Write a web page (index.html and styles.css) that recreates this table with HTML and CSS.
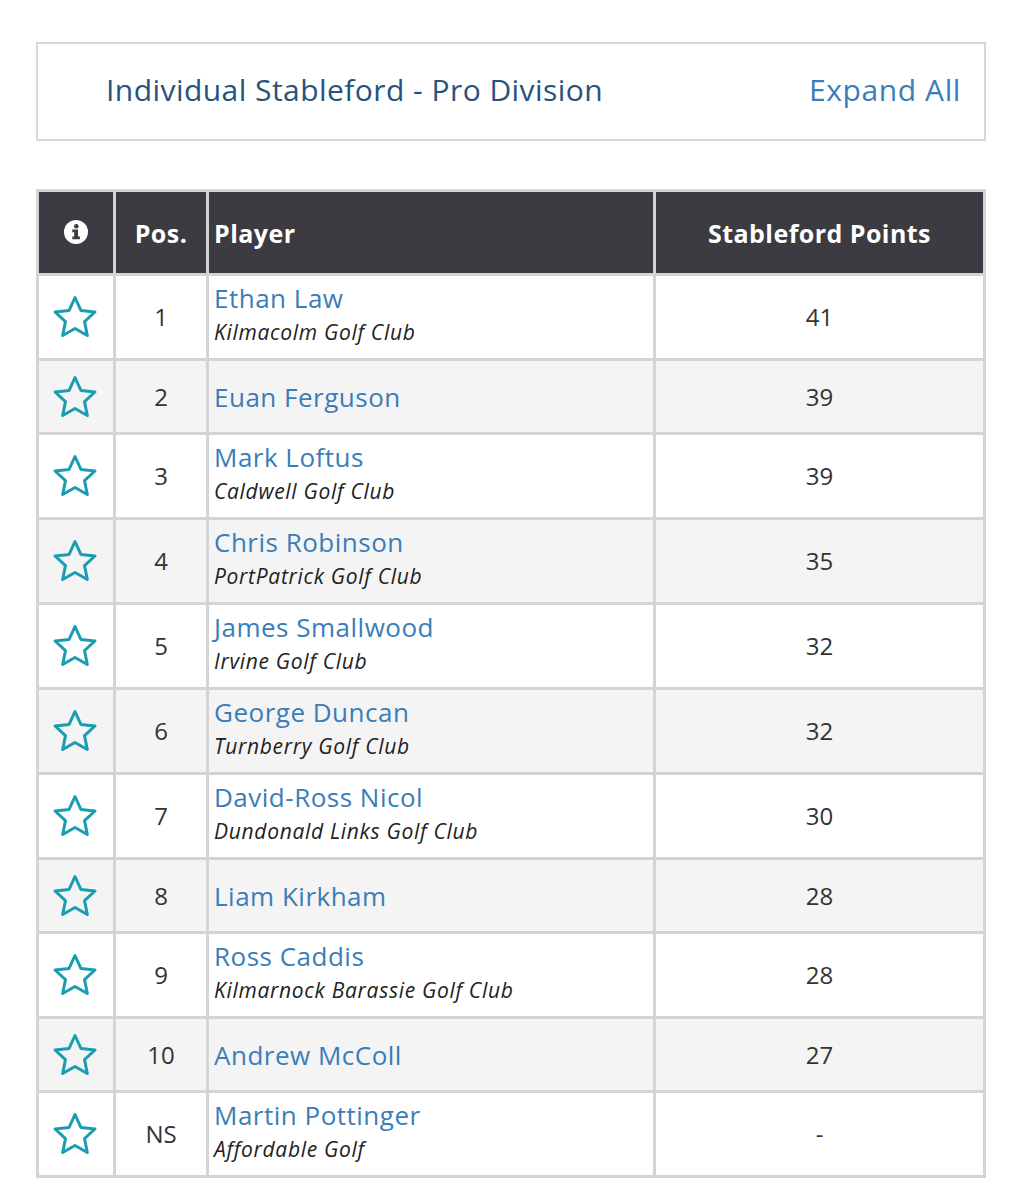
FILE: index.html
```html
<!DOCTYPE html>
<html>
<head>
<meta charset="utf-8">
<link rel="stylesheet" href="styles.css">
</head>
<body>
<div class="page">
  <div class="titlebox">
    <span class="title">Individual Stableford - Pro Division</span>
    <a class="expand">Expand All</a>
  </div>

  <table class="board">
    <colgroup>
      <col class="c-fav"><col class="c-pos"><col class="c-player"><col class="c-pts">
    </colgroup>
    <thead>
      <tr>
        <th class="fav"><svg class="info" viewBox="0 0 24 24" width="24" height="24"><circle cx="12" cy="12" r="12" fill="#fff"/><circle cx="12.3" cy="6.3" r="2.3" fill="#3c3b41"/><path d="M8.3 9.6H14V16.4H15.9V19.2H8.3V16.4H10.2V12.3H8.3Z" fill="#3c3b41"/></svg></th>
        <th class="pos">Pos.</th>
        <th class="player">Player</th>
        <th class="pts">Stableford Points</th>
      </tr>
    </thead>
    <tbody>
      <tr class="double"><td class="fav"><svg class="star" viewBox="0 0 48 48"><path d="M24 4.5L29.88 17.41L43.97 19.01L33.51 28.59L36.34 42.49L24 35.5L11.66 42.49L14.49 28.59L4.03 19.01L18.12 17.41Z"/></svg></td><td class="pos">1</td><td class="player"><a class="name">Ethan Law</a><span class="club">Kilmacolm Golf Club</span></td><td class="pts">41</td></tr>
      <tr class="single"><td class="fav"><svg class="star" viewBox="0 0 48 48"><path d="M24 4.5L29.88 17.41L43.97 19.01L33.51 28.59L36.34 42.49L24 35.5L11.66 42.49L14.49 28.59L4.03 19.01L18.12 17.41Z"/></svg></td><td class="pos">2</td><td class="player"><a class="name">Euan Ferguson</a></td><td class="pts">39</td></tr>
      <tr class="double"><td class="fav"><svg class="star" viewBox="0 0 48 48"><path d="M24 4.5L29.88 17.41L43.97 19.01L33.51 28.59L36.34 42.49L24 35.5L11.66 42.49L14.49 28.59L4.03 19.01L18.12 17.41Z"/></svg></td><td class="pos">3</td><td class="player"><a class="name">Mark Loftus</a><span class="club">Caldwell Golf Club</span></td><td class="pts">39</td></tr>
      <tr class="double"><td class="fav"><svg class="star" viewBox="0 0 48 48"><path d="M24 4.5L29.88 17.41L43.97 19.01L33.51 28.59L36.34 42.49L24 35.5L11.66 42.49L14.49 28.59L4.03 19.01L18.12 17.41Z"/></svg></td><td class="pos">4</td><td class="player"><a class="name">Chris Robinson</a><span class="club">PortPatrick Golf Club</span></td><td class="pts">35</td></tr>
      <tr class="double"><td class="fav"><svg class="star" viewBox="0 0 48 48"><path d="M24 4.5L29.88 17.41L43.97 19.01L33.51 28.59L36.34 42.49L24 35.5L11.66 42.49L14.49 28.59L4.03 19.01L18.12 17.41Z"/></svg></td><td class="pos">5</td><td class="player"><a class="name">James Smallwood</a><span class="club">Irvine Golf Club</span></td><td class="pts">32</td></tr>
      <tr class="double"><td class="fav"><svg class="star" viewBox="0 0 48 48"><path d="M24 4.5L29.88 17.41L43.97 19.01L33.51 28.59L36.34 42.49L24 35.5L11.66 42.49L14.49 28.59L4.03 19.01L18.12 17.41Z"/></svg></td><td class="pos">6</td><td class="player"><a class="name">George Duncan</a><span class="club">Turnberry Golf Club</span></td><td class="pts">32</td></tr>
      <tr class="double"><td class="fav"><svg class="star" viewBox="0 0 48 48"><path d="M24 4.5L29.88 17.41L43.97 19.01L33.51 28.59L36.34 42.49L24 35.5L11.66 42.49L14.49 28.59L4.03 19.01L18.12 17.41Z"/></svg></td><td class="pos">7</td><td class="player"><a class="name">David-Ross Nicol</a><span class="club">Dundonald Links Golf Club</span></td><td class="pts">30</td></tr>
      <tr class="single"><td class="fav"><svg class="star" viewBox="0 0 48 48"><path d="M24 4.5L29.88 17.41L43.97 19.01L33.51 28.59L36.34 42.49L24 35.5L11.66 42.49L14.49 28.59L4.03 19.01L18.12 17.41Z"/></svg></td><td class="pos">8</td><td class="player"><a class="name">Liam Kirkham</a></td><td class="pts">28</td></tr>
      <tr class="double"><td class="fav"><svg class="star" viewBox="0 0 48 48"><path d="M24 4.5L29.88 17.41L43.97 19.01L33.51 28.59L36.34 42.49L24 35.5L11.66 42.49L14.49 28.59L4.03 19.01L18.12 17.41Z"/></svg></td><td class="pos">9</td><td class="player"><a class="name">Ross Caddis</a><span class="club">Kilmarnock Barassie Golf Club</span></td><td class="pts">28</td></tr>
      <tr class="single"><td class="fav"><svg class="star" viewBox="0 0 48 48"><path d="M24 4.5L29.88 17.41L43.97 19.01L33.51 28.59L36.34 42.49L24 35.5L11.66 42.49L14.49 28.59L4.03 19.01L18.12 17.41Z"/></svg></td><td class="pos">10</td><td class="player"><a class="name">Andrew McColl</a></td><td class="pts">27</td></tr>
      <tr class="double"><td class="fav"><svg class="star" viewBox="0 0 48 48"><path d="M24 4.5L29.88 17.41L43.97 19.01L33.51 28.59L36.34 42.49L24 35.5L11.66 42.49L14.49 28.59L4.03 19.01L18.12 17.41Z"/></svg></td><td class="pos">NS</td><td class="player"><a class="name">Martin Pottinger</a><span class="club">Affordable Golf</span></td><td class="pts">-</td></tr>
    </tbody>
  </table>
</div>
</body>
</html>
```

FILE: styles.css
```css
html, body {
  margin: 0;
  padding: 0;
  background: #fff;
}
body {
  font-family: "Open Sans", "Lato", sans-serif;
  color: #333;
}
.page {
  width: 950px;
  margin: 42px 0 0 36px;
}
.titlebox {
  box-sizing: border-box;
  height: 99px;
  border: 2px solid #d8d8d8;
  display: flex;
  align-items: center;
  justify-content: space-between;
  padding: 0 23px 0 68px;
}
.title {
  font-size: 30px;
  letter-spacing: 0.45px;
  color: #28527e;
  position: relative;
  top: -2px;
}
.expand {
  font-size: 30px;
  letter-spacing: 0.6px;
  color: #3b7db8;
  position: relative;
  top: -2px;
}
.board {
  margin-top: 48px;
  width: 950px;
  border-collapse: collapse;
  table-layout: fixed;
}
.c-fav { width: 77px; }
.c-pos { width: 93px; }
.c-player { width: 447px; }
.c-pts { width: 330px; }
.board th, .board td {
  border: 3px solid #d4d4d4;
  padding: 0;
  vertical-align: middle;
}
.board th {
  background: #3c3b41;
  color: #fff;
  font-weight: 700;
  font-size: 25px;
  letter-spacing: 0.45px;
  line-height: 30px;
  height: 81px;
}
.board th.player { text-align: left; padding-left: 5px; }
.board th.pos, .board th.pts, .board th.fav { text-align: center; }
.info { display: block; margin: 0 auto; position: relative; top: -1px; }
.board tbody tr:nth-child(even) td { background: #f4f4f4; }
.board tbody tr.double td { height: 82px; }
.board tbody tr.single td { height: 71px; }
.board td.fav, .board td.pos, .board td.pts {
  text-align: center;
  font-size: 24px;
  line-height: 30px;
  color: #333;
}
.board td.player {
  padding-left: 5px;
}
.star {
  display: block;
  width: 48px;
  height: 48px;
  margin: 0 auto;
  position: relative;
  left: -1px;
}
.star path {
  fill: none;
  stroke: #1a9db3;
  stroke-width: 3;
  stroke-linejoin: round;
}
.name {
  display: block;
  font-size: 26px;
  letter-spacing: 0.5px;
  line-height: 28px;
  color: #3a7db8;
}
.double .name, .double .club {
  position: relative;
  top: -2px;
}
.club {
  display: block;
  font-size: 21px;
  letter-spacing: 0.7px;
  line-height: 28px;
  margin-top: 6px;
  font-style: italic;
  color: #222;
}
```
